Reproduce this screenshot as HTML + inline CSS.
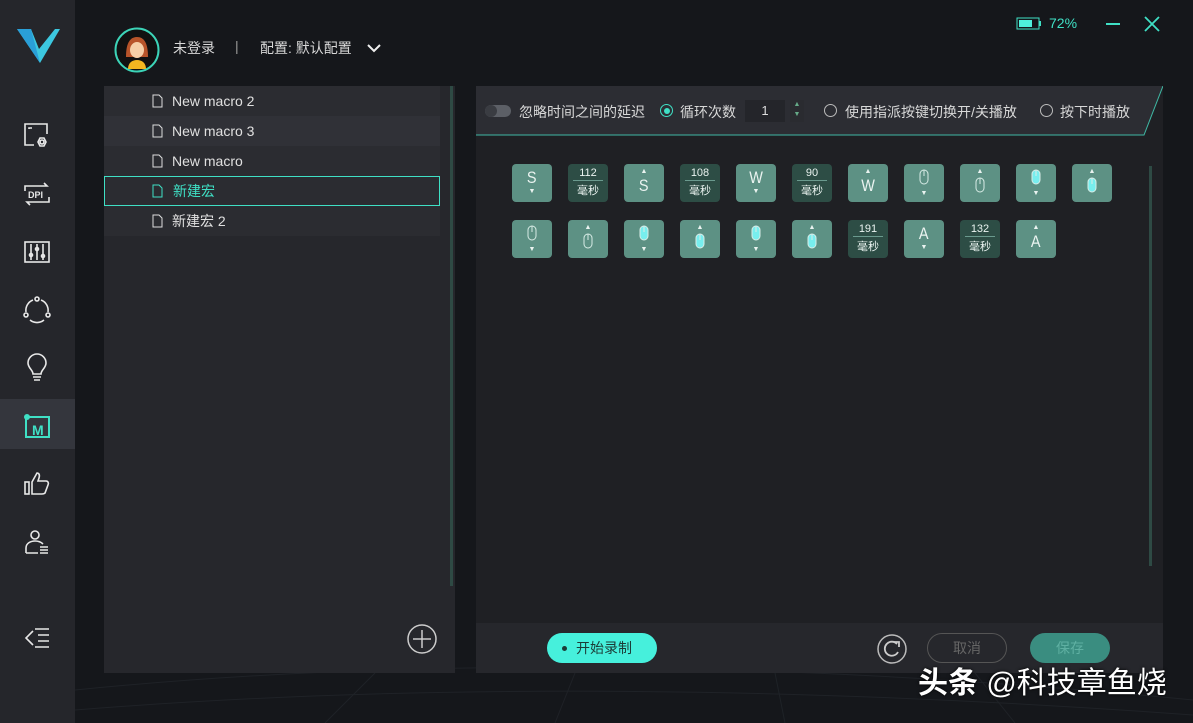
<!DOCTYPE html>
<html><head><meta charset="utf-8"><style>
*{margin:0;padding:0;box-sizing:border-box}
body{width:1193px;height:723px;overflow:hidden;background:#15171b;font-family:"Liberation Sans","Noto Sans CJK SC",sans-serif;color:#d8d8d8;position:relative}
.abs{position:absolute}
#side{left:0;top:0;width:75px;height:723px;background:#25262b}
.ic{position:absolute;left:22px;width:30px;height:30px}
#list{left:104px;top:86px;width:351px;height:587px;background:#26272c}
.it{position:absolute;left:0;width:336px;height:30px;font-size:14px;line-height:30px;padding-left:68px;color:#e0e0e0;background:#2b2c31}
.it svg{position:absolute;left:48px;top:8px}
#right{left:476px;top:86px;width:687px;height:587px;background:#1f2024}
.k{position:absolute;width:40px;height:38px;border-radius:4px;background:#5d9184;color:#eaf3f0;text-align:center;font-size:17px}
.k.d{background:#2d4d45;font-size:11px}
.t{position:absolute;font-size:14px;color:#d8d8d8;white-space:nowrap}
</style></head><body>
<svg class="abs" style="left:75px;top:0" width="1118" height="723"><g stroke="#1f2227" stroke-width="1" fill="none">
<path d="M0 690 Q500 640 1118 700"/><path d="M0 710 Q500 670 1118 715"/><path d="M300 673 L250 723"/><path d="M500 673 L480 723"/><path d="M700 673 L710 723"/><path d="M900 673 L940 723"/>
</g></svg>
<div id="side" class="abs">
<svg class="abs" style="left:17px;top:27px" width="44" height="38"><path d="M0 2 L14 2 L22 22 L38 2 L43 2 L23 36 Z" fill="#3cc8e0"/><path d="M0 2 L14 2 L23 36 Z" fill="#2a9fd8"/></svg>
<div class="abs" style="left:0;top:399px;width:75px;height:50px;background:#34363d"></div>
<svg class="ic" style="top:121px" viewBox="0 0 30 30" fill="none" stroke="#e8e8e8" stroke-width="1.6"><path d="M12 24H3V3h22v10"/><path d="M7 8V7h3"/><circle cx="20" cy="21" r="2"/><path d="M16 21l2-4h4l2 4-2 4h-4z"/></svg>
<svg class="ic" style="top:179px" viewBox="0 0 30 30" fill="none" stroke="#e8e8e8" stroke-width="1.6"><path d="M3 12V7h22l-3-3M27 18v5H5l3 3"/><text x="6" y="19" font-size="9" fill="#e8e8e8" stroke="none" font-family="Liberation Sans" font-weight="bold">DPI</text></svg>
<svg class="ic" style="top:237px" viewBox="0 0 30 30" fill="none" stroke="#e8e8e8" stroke-width="1.6"><rect x="3" y="5" width="24" height="20"/><path d="M9 7v16M15 7v16M21 7v16"/><circle cx="9" cy="18" r="1.5"/><circle cx="15" cy="12" r="1.5"/><circle cx="21" cy="19" r="1.5"/></svg>
<svg class="ic" style="top:295px" viewBox="0 0 30 30" fill="none" stroke="#e8e8e8" stroke-width="1.6"><path d="M11 5A11 11 0 0 0 4 17M8 25a11 11 0 0 0 14 0M26 17A11 11 0 0 0 19 5"/><circle cx="15" cy="4" r="2"/><circle cx="4" cy="20" r="2"/><circle cx="26" cy="20" r="2"/></svg>
<svg class="ic" style="top:353px" viewBox="0 0 30 30" fill="none" stroke="#e8e8e8" stroke-width="1.6"><path d="M11 21c0-4-5-6-5-11a9 9 0 0 1 18 0c0 5-5 7-5 11z"/><path d="M11 24h8M12 27h6"/></svg>
<svg class="ic" style="top:411px" viewBox="0 0 30 30" fill="none" stroke="#3fe0c5" stroke-width="2"><path d="M4 6h23v20H4z"/><circle cx="5" cy="6" r="2" fill="#3fe0c5"/><text x="10" y="24" font-size="14" fill="#3fe0c5" stroke="none" font-family="Liberation Sans" font-weight="bold">M</text></svg>
<svg class="ic" style="top:469px" viewBox="0 0 30 30" fill="none" stroke="#e8e8e8" stroke-width="1.6"><rect x="3" y="13" width="4" height="12"/><path d="M10 13l5-9c2 0 3 2 2 5l-1 3h8c2 0 3 2 2 4l-3 8c-1 1-2 1-3 1H10z"/></svg>
<svg class="ic" style="top:527px" viewBox="0 0 30 30" fill="none" stroke="#e8e8e8" stroke-width="1.6"><circle cx="13" cy="8" r="4"/><path d="M4 26v-5c0-5 5-7 9-7s6 1 8 3"/><path d="M4 26h12M18 20h8M18 23h8M18 26h8"/></svg>
<svg class="ic" style="top:623px" viewBox="0 0 30 30" fill="none" stroke="#e8e8e8" stroke-width="1.6"><path d="M11 8l-7 7 7 7M13 6h14M16 12h11M16 18h11M13 24h14"/></svg>
</div>
<svg class="abs" style="left:114px;top:27px" width="46" height="46"><circle cx="23" cy="23" r="21.5" fill="#111" stroke="#3cd4b8" stroke-width="2"/><path d="M12 30c0-14 4-20 11-20s11 6 11 20z" fill="#b8542a"/><ellipse cx="23" cy="23" rx="7" ry="8" fill="#f6cfa8"/><path d="M14 42c0-6 4-9 9-9s9 3 9 9z" fill="#f3b620"/></svg>
<div class="t" style="left:173px;top:38px">未登录</div>
<div class="t" style="left:235px;top:38px;color:#999">|</div>
<div class="t" style="left:260px;top:38px">配置: 默认配置</div>
<svg class="abs" style="left:366px;top:42px" width="16" height="12"><path d="M2 3l6 6 6-6" stroke="#eee" stroke-width="2" fill="none"/></svg>
<svg class="abs" style="left:1016px;top:17px" width="26" height="14"><rect x="1" y="1" width="22" height="11" fill="none" stroke="#3fe0c5" stroke-width="1"/><rect x="3" y="3" width="13" height="7" fill="#4ff0dc"/><rect x="23" y="4" width="2" height="5" fill="#3fe0c5"/></svg>
<div class="t" style="left:1049px;top:15px;color:#3fe0c5">72%</div>
<div class="abs" style="left:1106px;top:23px;width:14px;height:2px;background:#3fe0c5"></div>
<svg class="abs" style="left:1144px;top:16px" width="16" height="16"><path d="M1 1l14 14M15 1L1 15" stroke="#3fe0c5" stroke-width="1.8"/></svg>
<div id="list" class="abs">
<div class="it" style="top:0">New macro 2<svg width="11" height="14"><path d="M1 1h6l3 3v9H1z" fill="none" stroke="#ddd"/></svg></div>
<div class="it" style="top:30px;background:#303137">New macro 3<svg width="11" height="14"><path d="M1 1h6l3 3v9H1z" fill="none" stroke="#ddd"/></svg></div>
<div class="it" style="top:60px">New macro<svg width="11" height="14"><path d="M1 1h6l3 3v9H1z" fill="none" stroke="#ddd"/></svg></div>
<div class="it" style="top:90px;border:1px solid #3fe0c5;color:#3fe0c5;line-height:28px"><svg width="11" height="14" style="top:7px;left:47px"><path d="M1 1h6l3 3v9H1z" fill="none" stroke="#3fe0c5"/></svg>新建宏</div>
<div class="it" style="top:120px">新建宏 2<svg width="11" height="14"><path d="M1 1h6l3 3v9H1z" fill="none" stroke="#ddd"/></svg></div>
<div class="abs" style="left:346px;top:0;width:3px;height:500px;background:#2e4a44"></div>
<svg class="abs" style="left:302px;top:537px" width="32" height="32"><circle cx="16" cy="16" r="14" fill="none" stroke="#ccc" stroke-width="1.5"/><path d="M16 7v18M7 16h18" stroke="#ccc" stroke-width="1.5"/></svg>
</div>
<div id="right" class="abs">
<svg class="abs" style="left:0;top:0" width="687" height="50"><path d="M0 0H687L668 49H0z" fill="#2c2d33"/><path d="M0 49H668L687 0" stroke="#3fb8a4" stroke-width="1" fill="none"/></svg>
<div class="abs" style="left:9px;top:19px;width:26px;height:12px;border-radius:6px;background:#5c5f66"></div><div class="abs" style="left:9px;top:19px;width:12px;height:12px;border-radius:6px;background:#3a3c42"></div>
<div class="t" style="left:43px;top:16px">忽略时间之间的延迟</div>
<div class="abs" style="left:184px;top:18px;width:13px;height:13px;border-radius:50%;border:1.5px solid #3fe0c5"></div><div class="abs" style="left:187.5px;top:21.5px;width:6px;height:6px;border-radius:50%;background:#3fe0c5"></div>
<div class="t" style="left:204px;top:16px">循环次数</div>
<div class="abs" style="left:269px;top:14px;width:40px;height:22px;background:#24252a;font-size:13px;text-align:center;line-height:22px;color:#ddd">1</div>
<div class="abs" style="left:314px;top:14px;width:14px;height:22px;background:#2a2b30;font-size:7px;color:#6a8;line-height:10px;text-align:center">▲<br>▼</div>
<div class="abs" style="left:348px;top:18px;width:13px;height:13px;border-radius:50%;border:1px solid #bbb"></div>
<div class="t" style="left:369px;top:16px">使用指派按键切换开/关播放</div>
<div class="abs" style="left:564px;top:18px;width:13px;height:13px;border-radius:50%;border:1px solid #bbb"></div>
<div class="t" style="left:584px;top:16px">按下时播放</div>
<div class="abs" style="left:673px;top:80px;width:3px;height:400px;background:#2e4a44"></div>
<div class="abs" style="left:0;top:537px;width:687px;height:50px;background:#26272c"></div>
<div class="abs" style="left:71px;top:547px;width:110px;height:30px;border-radius:15px;background:#46f0dc;color:#1c3b36;font-size:14px;line-height:30px;padding-left:29px">开始录制</div>
<div class="abs" style="left:86px;top:560px;width:5px;height:5px;border-radius:50%;background:#1c3b36"></div>
<svg class="abs" style="left:400px;top:547px" width="32" height="32"><circle cx="16" cy="16" r="14" fill="none" stroke="#bbb" stroke-width="1.5"/><path d="M21 11a7 7 0 1 0 1 8" fill="none" stroke="#ccc" stroke-width="1.8"/><path d="M18 9h5v5" fill="none" stroke="#ccc" stroke-width="1.8"/></svg>
<div class="abs" style="left:451px;top:547px;width:80px;height:30px;border-radius:15px;border:1px solid #555;color:#666;font-size:14px;line-height:28px;text-align:center">取消</div>
<div class="abs" style="left:554px;top:547px;width:80px;height:30px;border-radius:15px;background:#3a8d80;color:#5fb0a2;font-size:14px;line-height:30px;text-align:center">保存</div>
</div>
<div id="keys"></div>
<div class="abs" style="left:918px;top:664px;font-size:30px;color:#fff;white-space:nowrap;text-shadow:0 0 3px #000;line-height:40px"><b>头条</b> @科技章鱼烧</div>
<script>
var r1=["Sd","112","Su","108","Wd","90","Wu","md","mu","Md","Mu"],r2=["md","mu","Md","Mu","Md","Mu","191","Ad","132","Au"];
var h="";
function key(c,x,y){
 if(/^\d/.test(c)) return '<div class="k d" style="left:'+x+'px;top:'+y+'px"><div style="padding-top:3px">'+c+'</div><div style="margin:1px 5px;height:1px;background:#6a9a8e"></div><div>毫秒</div></div>';
 var l=c[0],d=c[1];var inner;
 var ms=(l=='m'||l=='M')?'<svg width="10" height="16" viewBox="0 0 10 16"><rect x="1" y="1" width="8" height="14" rx="4" fill="'+(l=='M'?'#7ee':'none')+'" stroke="#d8ece6"/><path d="M5 1v6" stroke="#d8ece6"/></svg>':'<span style="display:inline-block;transform:scaleX(0.85)">'+l+'</span>';
 if(d=='d') inner='<div style="padding-top:5px;line-height:18px">'+ms+'</div><div style="font-size:7px;line-height:10px">▼</div>';
 else inner='<div style="font-size:7px;line-height:10px;padding-top:3px">▲</div><div style="line-height:18px">'+ms+'</div>';
 return '<div class="k" style="left:'+x+'px;top:'+y+'px">'+inner+'</div>';
}
r1.forEach(function(c,i){h+=key(c,512+56*i,164)});
r2.forEach(function(c,i){h+=key(c,512+56*i,220)});
document.getElementById("keys").innerHTML=h;
</script>
</body></html>
